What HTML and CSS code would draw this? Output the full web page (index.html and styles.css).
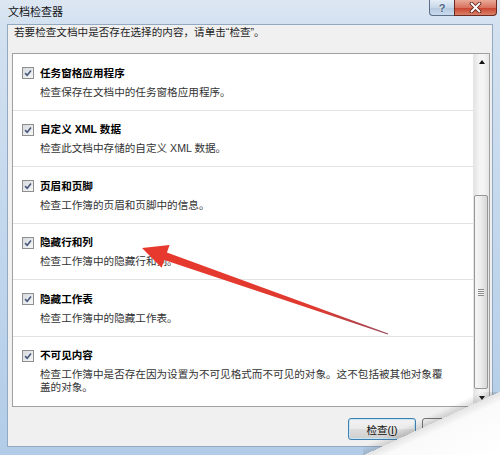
FILE: index.html
```html
<!DOCTYPE html>
<html lang="zh-CN">
<head>
    <meta charset="UTF-8">
    <meta name="viewport" content="width=device-width, initial-scale=1.0">
    <title>文档检查器</title>
    <link rel="stylesheet" href="styles.css">
</head>
<body>
    <div class="window">
        <div class="titlebar">
            <span class="title">文档检查器</span>
            <div class="caption">
                <span class="cap-btn help">?</span>
                <span class="cap-btn close">
                    <svg width="13" height="11" viewBox="0 0 13 11">
                        <path d="M2.5 1.5 L10.5 9.5 M10.5 1.5 L2.5 9.5" stroke="#5a2018" stroke-width="3.6" stroke-linecap="round"/>
                        <path d="M2.5 1.5 L10.5 9.5 M10.5 1.5 L2.5 9.5" stroke="#fff" stroke-width="1.9" stroke-linecap="round"/>
                    </svg>
                </span>
            </div>
        </div>

        <div class="frame">
            <div class="client">
                <p class="intro">若要检查文档中是否存在选择的内容，请单击“检查”。</p>

                <div class="listbox">
                    <div class="items">
                        <div class="item">
                            <div class="item-title"><span class="check"><svg viewBox="0 0 11 11"><path d="M2.3 5.6 L4.6 8 L8.8 2.8"/></svg></span>任务窗格应用程序</div>
                            <div class="item-desc">检查保存在文档中的任务窗格应用程序。</div>
                        </div>
                        <div class="item">
                            <div class="item-title"><span class="check"><svg viewBox="0 0 11 11"><path d="M2.3 5.6 L4.6 8 L8.8 2.8"/></svg></span>自定义 XML 数据</div>
                            <div class="item-desc">检查此文档中存储的自定义 XML 数据。</div>
                        </div>
                        <div class="item">
                            <div class="item-title"><span class="check"><svg viewBox="0 0 11 11"><path d="M2.3 5.6 L4.6 8 L8.8 2.8"/></svg></span>页眉和页脚</div>
                            <div class="item-desc">检查工作簿的页眉和页脚中的信息。</div>
                        </div>
                        <div class="item">
                            <div class="item-title"><span class="check"><svg viewBox="0 0 11 11"><path d="M2.3 5.6 L4.6 8 L8.8 2.8"/></svg></span>隐藏行和列</div>
                            <div class="item-desc">检查工作簿中的隐藏行和列。</div>
                        </div>
                        <div class="item">
                            <div class="item-title"><span class="check"><svg viewBox="0 0 11 11"><path d="M2.3 5.6 L4.6 8 L8.8 2.8"/></svg></span>隐藏工作表</div>
                            <div class="item-desc">检查工作簿中的隐藏工作表。</div>
                        </div>
                        <div class="item last">
                            <div class="item-title"><span class="check"><svg viewBox="0 0 11 11"><path d="M2.3 5.6 L4.6 8 L8.8 2.8"/></svg></span>不可见内容</div>
                            <div class="item-desc">检查工作簿中是否存在因为设置为不可见格式而不可见的对象。这不包括被其他对象覆盖的对象。</div>
                        </div>
                    </div>

                    <div class="scrollbar">
                        <div class="sb-btn"><span class="arrow-up"></span></div>
                        <div class="sb-thumb"><span class="grip"></span></div>
                        <div class="sb-btn sb-down"><span class="arrow-down"></span></div>
                    </div>
                </div>

                <div class="buttons">
                    <button class="btn default">检查(<u>I</u>)</button>
                    <button class="btn">关闭(<u>C</u>)</button>
                </div>
            </div>
        </div>
    </div>

    <!-- annotation arrow drawn over the dialog -->
    <svg class="pointer" width="500" height="455" viewBox="0 0 500 455">
        <defs>
            <linearGradient id="arrowFill" x1="142" y1="248" x2="388" y2="334" gradientUnits="userSpaceOnUse">
                <stop offset="0" stop-color="#e8392d"/>
                <stop offset="0.7" stop-color="#df3a30"/>
                <stop offset="1" stop-color="#9a4a5a"/>
            </linearGradient>
        </defs>
        <polygon fill="url(#arrowFill)" points="142,248 169.6,244.9 166.9,252.5 388.2,333.5 387.8,334.5 164.3,260.1 161.6,267.7"/>
    </svg>

    <div class="curl"></div>
</body>
</html>
```

FILE: styles.css
```css
* {
    box-sizing: border-box;
}
html, body {
    margin: 0;
    padding: 0;
}
body {
    width: 500px;
    height: 455px;
    overflow: hidden;
    position: relative;
    font-family: "Liberation Sans", "Noto Sans CJK SC", sans-serif;
    font-size: 10.6px;
    color: #1e1e1e;
    background: #c3d7ec;
}
.window {
    height: 455px;
    display: flex;
    flex-direction: column;
    background: linear-gradient(to bottom, #dde7f2 0, #d3e1f0 24px, #bfd5ec 60%, #b2cce8 100%);
}

/* title bar */
.titlebar {
    height: 24px;
    display: flex;
    justify-content: space-between;
    align-items: flex-start;
    padding-left: 8px;
}
.title {
    line-height: 24px;
    font-size: 11px;
    color: #111;
}
.caption {
    display: flex;
    margin-right: 3px;
}
.cap-btn {
    height: 16px;
    display: flex;
    align-items: center;
    justify-content: center;
    border: 1px solid #5d6f86;
    border-top: none;
}
.help {
    width: 25px;
    border-right: none;
    border-radius: 0 0 0 4px;
    background: linear-gradient(to bottom, #e4edf6, #c7d7e9 50%, #b3c7de 51%, #c9dbee);
    color: #4b6384;
    font-weight: bold;
    font-size: 11px;
    text-shadow: 0 0 2px #fff;
}
.close {
    width: 43px;
    border-color: #6b2a20;
    border-radius: 0 0 4px 0;
    background: linear-gradient(to bottom, #e9a998, #d8735f 50%, #c8402b 51%, #d9826a);
}

/* dialog body */
.frame {
    flex: 1;
    display: flex;
    padding: 0 7px 8px 7px;
}
.client {
    flex: 1;
    display: flex;
    flex-direction: column;
    background: #f0f0f0;
    border: 1px solid #93a9c2;
    padding: 0 2px 0 4px;
}
.intro {
    margin: 0 0 14px 2px;
    line-height: 14px;
    color: #1e1e1e;
}

/* list box */
.listbox {
    height: 354px;
    display: flex;
    border: 1px solid #a0a0a0;
    background: #fff;
}
.items {
    flex: 1;
    overflow: hidden;
}
.item {
    height: 56.5px;
    padding: 12.5px 0 0 9px;
    border-bottom: 1px solid #e2e2e2;
}
.item.last {
    height: auto;
    border-bottom: none;
}
.item-title {
    display: flex;
    align-items: center;
    line-height: 13px;
    font-weight: bold;
    color: #000;
}
.check {
    width: 12px;
    height: 12px;
    margin-right: 6px;
    border: 1px solid #8e8f8f;
    background: linear-gradient(135deg, #d6d9de, #f6f7f8);
    display: flex;
}
.check svg {
    width: 10px;
    height: 10px;
    fill: none;
    stroke: #46577a;
    stroke-width: 1.7;
}
.item-desc {
    margin-top: 6px;
    padding-left: 18px;
    line-height: 13px;
    max-width: 428px;
    color: #333;
}

/* scroll bar */
.scrollbar {
    width: 16px;
    display: flex;
    flex-direction: column;
    border-left: 1px solid #e6e6e6;
    background: linear-gradient(to right, #e4e4e4, #f4f4f4 35%, #f4f4f4 65%, #e6e6e6);
}
.sb-btn {
    height: 17px;
    display: flex;
    align-items: center;
    justify-content: center;
}
.sb-down {
    margin-top: auto;
}
.arrow-up {
    border-left: 3.5px solid transparent;
    border-right: 3.5px solid transparent;
    border-bottom: 4px solid #111;
}
.arrow-down {
    border-left: 3.5px solid transparent;
    border-right: 3.5px solid transparent;
    border-top: 4px solid #111;
}
.sb-thumb {
    height: 197px;
    margin: 124px 1px 0 0;
    border: 1px solid #979797;
    border-radius: 2px;
    background: linear-gradient(to right, #f6f6f6, #ececec 50%, #d6d6d6);
    display: flex;
    align-items: center;
    justify-content: center;
}
.grip {
    width: 6px;
    height: 7px;
    background: repeating-linear-gradient(to bottom, #8a8a8a 0, #8a8a8a 1px, #f6f6f6 1px, #f6f6f6 2px);
}

/* buttons */
.buttons {
    display: flex;
    justify-content: flex-end;
    gap: 6px;
    margin-top: 11px;
}
.btn {
    width: 68px;
    height: 22px;
    font-family: inherit;
    font-size: 10.6px;
    color: #111;
    border: 1px solid #707070;
    border-radius: 3px;
    background: linear-gradient(to bottom, #f2f2f2, #ebebeb 50%, #dddddd 51%, #cfcfcf);
    padding: 0;
}
.btn.default {
    border-color: #3c7fb1;
    box-shadow: inset 0 0 0 1px #c8e6f4;
}

/* overlays */
.pointer {
    position: absolute;
    left: 0;
    top: 0;
    pointer-events: none;
}
.curl {
    position: absolute;
    left: 363px;
    top: 392px;
    width: 137px;
    height: 63px;
    background: linear-gradient(155deg, rgba(0, 0, 0, 0) 43%, rgba(90, 90, 90, 0.22) 50%, #e4e4e4 50%, #fafafa 58%, #fff 100%);
}
```
